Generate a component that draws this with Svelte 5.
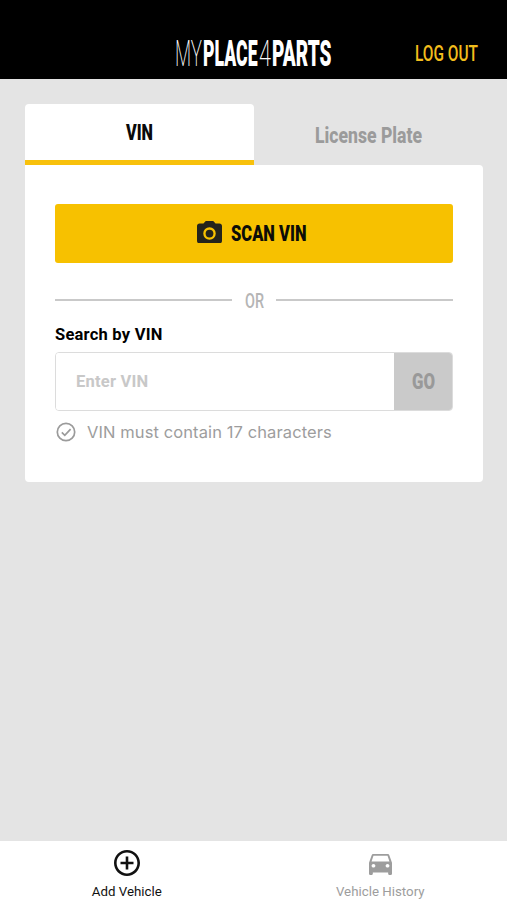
<script lang="ts">
	let tab = $state('vin');
	let vin = $state('');
</script>

<!-- svg label squeezed to a fixed width, the box is exactly one cap height tall -->
{#snippet narrow(text: string, width: number, cap: number, weight: number, squeeze = 1.2)}
	<svg class="narrow" {width} height={cap} viewBox="0 0 {width * squeeze} {cap}" preserveAspectRatio="none">
		<text x="0" y={cap} font-size={cap / 0.711} font-weight={weight} textLength={width * squeeze} lengthAdjust="spacingAndGlyphs">{text}</text>
	</svg>
{/snippet}

<div class="app">
	<header>
		<div class="logo">
			{@render narrow('MY', 27, 26, 200, 2)}
			{@render narrow('PLACE', 54.5, 26, 900, 2.15)}
			{@render narrow('4', 12, 26, 200, 1.75)}
			{@render narrow('PARTS', 59.5, 26, 900, 2.05)}
		</div>
		<button class="logout">{@render narrow('LOG OUT', 63, 16, 500)}</button>
	</header>

	<main>
		<div class="tabs">
			<button class="tab" class:active={tab === 'vin'} onclick={() => (tab = 'vin')}>
				{@render narrow('VIN', 27, 16, 900)}
			</button>
			<button class="tab plate" class:active={tab === 'plate'} onclick={() => (tab = 'plate')}>
				{@render narrow('License Plate', 107, 16, 800)}
			</button>
		</div>

		<section class="card">
			<button class="scan">
				<svg class="camera" viewBox="2 2 20 18" width="25" height="22.5">
					<path fill-rule="evenodd" d="M9 2 7.17 4H4c-1.1 0-2 .9-2 2v12c0 1.1.9 2 2 2h16c1.1 0 2-.9 2-2V6c0-1.1-.9-2-2-2h-3.17L15 2H9zm3 15a5 5 0 1 1 0-10 5 5 0 0 1 0 10z" />
					<circle cx="12" cy="12" r="3.1" />
				</svg>
				{@render narrow('SCAN VIN', 75.5, 16, 900)}
			</button>

			<div class="or">
				<span class="line"></span>
				{@render narrow('OR', 19, 14.5, 500)}
				<span class="line"></span>
			</div>

			<label for="vin">Search by VIN</label>
			<div class="field">
				<input id="vin" placeholder="Enter VIN" bind:value={vin} />
				<button class="go">{@render narrow('GO', 23, 16, 900)}</button>
			</div>

			<div class="hint">
				<svg viewBox="0 0 20 20" width="20" height="20">
					<circle cx="10" cy="10" r="8.7" />
					<path d="m5.8 10.3 3 3 5.8-6.1" />
				</svg>
				<span>VIN must contain 17 characters</span>
			</div>
		</section>
	</main>

	<nav>
		<button class="item current">
			<svg viewBox="2 2 20 20" width="26" height="26">
				<path d="M13 7h-2v4H7v2h4v4h2v-4h4v-2h-4V7zm-1-5C6.48 2 2 6.48 2 12s4.48 10 10 10 10-4.48 10-10S17.52 2 12 2zm0 18c-4.41 0-8-3.59-8-8s3.59-8 8-8 8 3.59 8 8-3.59 8-8 8z" />
			</svg>
			<span>Add Vehicle</span>
		</button>
		<button class="item">
			<svg class="car" viewBox="3 4 18 17" preserveAspectRatio="none" width="23" height="21">
				<path d="M18.92 5.01C18.72 4.42 18.16 4 17.5 4h-11c-.66 0-1.21.42-1.42 1.01L3 11v9c0 .55.45 1 1 1h1c.55 0 1-.45 1-1v-1h12v1c0 .55.45 1 1 1h1c.55 0 1-.45 1-1v-9l-2.08-5.99zM6.5 15c-.83 0-1.5-.67-1.5-1.5S5.67 12 6.5 12s1.5.67 1.5 1.5S7.33 15 6.5 15zm11 0c-.83 0-1.5-.67-1.5-1.5s.67-1.5 1.5-1.5 1.5.67 1.5 1.5-.67 1.5-1.5 1.5zM5 10l1.5-4.5h11L19 10H5z" />
			</svg>
			<span>Vehicle History</span>
		</button>
	</nav>
</div>

<style>
	:global(body) {
		margin: 0;
	}

	.app {
		height: 900px;
		display: flex;
		flex-direction: column;
		background: #e4e4e4;
		font-family: Roboto, 'Liberation Sans', sans-serif;
		overflow: hidden;
	}

	button {
		display: flex;
		align-items: center;
		justify-content: center;
		margin: 0;
		padding: 0;
		border: 0;
		background: none;
		color: inherit;
		font: inherit;
	}

	.narrow {
		display: block;
		flex: none;
		overflow: visible;
		fill: currentColor;
	}

	header {
		box-sizing: border-box;
		height: 79px;
		flex: none;
		display: flex;
		justify-content: space-between;
		align-items: flex-start;
		padding: 39.5px 29.5px 0 175px;
		background: #000;
		color: #fff;
	}

	.logo {
		display: flex;
		gap: 1.2px;
	}

	.logout {
		margin-top: 5.5px;
		color: #f2bd1c;
	}

	main {
		flex: 1;
		padding: 24.5px 24.5px 0 25px;
	}

	.tabs {
		display: grid;
		grid-template-columns: 1fr 1fr;
		height: 61px;
	}

	.tab {
		box-sizing: border-box;
		padding-top: 1px;
		border-bottom: 4.5px solid transparent;
		border-radius: 4px 4px 0 0;
		color: #9b9b9b;
	}

	.plate {
		padding-top: 5px;
	}

	.tab.active {
		background: #fff;
		border-bottom: 0;
		border-radius: 4px 4px 0 0;
		box-shadow: inset 0 -5px #f8c10c;
		padding-bottom: 5px;
		color: #0a0a0a;
	}

	.card {
		box-sizing: border-box;
		height: 317px;
		padding: 39.5px 29.5px 0 30px;
		border-radius: 0 4px 4px 4px;
		background: #fff;
	}

	.scan {
		width: 100%;
		height: 58.5px;
		padding-right: 5px;
		gap: 9.5px;
		border-radius: 3px;
		background: #f7c100;
		color: #0d0d08;
	}

	.camera {
		margin-top: -3px;
		fill: #24241c;
	}

	.or {
		display: flex;
		align-items: center;
		gap: 12.5px;
		height: 15px;
		margin-top: 30px;
		color: #b5b5b5;
	}

	.line {
		flex: 1;
		height: 2px;
		margin-top: -1px;
		background: #c9c9c9;
	}

	label {
		display: block;
		margin-top: 17px;
		font-size: 16.5px;
		line-height: 20px;
		font-weight: 700;
		letter-spacing: 0.23px;
		color: #000;
	}

	.field {
		box-sizing: border-box;
		display: flex;
		height: 59px;
		margin-top: 7px;
		border: 1.5px solid #dcdcdc;
		border-radius: 4px;
		overflow: hidden;
	}

	input {
		flex: 1;
		min-width: 0;
		padding: 0 20px;
		border: 0;
		outline: 0;
		font: 700 16.5px Roboto, sans-serif;
		letter-spacing: 0.23px;
		color: #222;
	}

	input::placeholder {
		color: #c8c8c8;
		opacity: 1;
	}

	.go {
		box-sizing: border-box;
		width: 59px;
		margin: -1px -1px -1px 0;
		background: #cacaca;
		color: #999;
	}

	.hint {
		display: flex;
		align-items: center;
		gap: 11px;
		margin-top: 10px;
		padding-left: 1px;
		color: #9d9d9d;
		font: 16.5px/22px Inter, sans-serif;
		letter-spacing: 0.1px;
		white-space: nowrap;
	}

	.hint svg {
		fill: none;
		stroke: #9b9b9b;
		stroke-width: 1.7;
	}

	nav {
		flex: none;
		display: grid;
		grid-template-columns: 1fr 1fr;
		height: 59.5px;
		background: #fff;
	}

	.item {
		flex-direction: column;
		justify-content: flex-start;
		padding-top: 9px;
		color: #9d9d9d;
		font-size: 13.3px;
		line-height: 16px;
	}

	.item svg {
		fill: currentColor;
	}

	.item .car {
		margin: 4px 0 1px;
	}

	.item span {
		margin-top: 8px;
	}

	.current {
		color: #111;
	}
</style>
